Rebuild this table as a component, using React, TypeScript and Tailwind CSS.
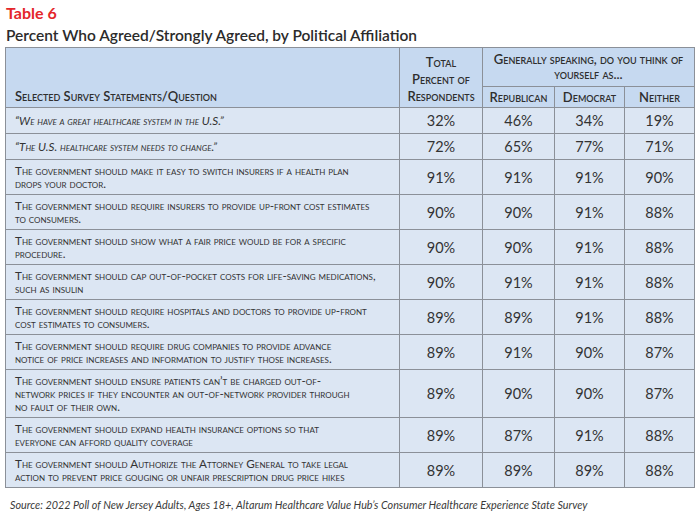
import React from "react";

const rows: [React.ReactNode, string, string, string, string][] = [
  [<span className="italic">“We have a great healthcare system in the U.S.”</span>, "32%", "46%", "34%", "19%"],
  [<span className="italic">“The U.S. healthcare system needs to change.”</span>, "72%", "65%", "77%", "71%"],
  [<>The government should make it easy to switch insurers if a health plan<br />drops your doctor.</>, "91%", "91%", "91%", "90%"],
  [<>The government should require insurers to provide up-front cost estimates<br />to consumers.</>, "90%", "90%", "91%", "88%"],
  [<>The government should show what a fair price would be for a specific<br />procedure.</>, "90%", "90%", "91%", "88%"],
  [<>The government should cap out-of-pocket costs for life-saving medications,<br />such as insulin</>, "90%", "91%", "91%", "88%"],
  [<>The government should require hospitals and doctors to provide up-front<br />cost estimates to consumers.</>, "89%", "89%", "91%", "88%"],
  [<>The government should require drug companies to provide advance<br />notice of price increases and information to justify those increases.</>, "89%", "91%", "90%", "87%"],
  [<>The government should ensure patients can’t be charged out-of-<br />network prices if they encounter an out-of-network provider through<br />no fault of their own.</>, "89%", "90%", "90%", "87%"],
  [<>The government should expand health insurance options so that<br />everyone can afford quality coverage</>, "89%", "87%", "91%", "88%"],
  [<>The government should Authorize the Attorney General to take legal<br />action to prevent price gouging or unfair prescription drug price hikes</>, "89%", "89%", "89%", "88%"],
];

const App = () => {
  return (
    <div className="w-[700px] h-[517px] bg-white font-['Lato',sans-serif] text-[#333]">
      <div className="pl-[6px] pt-[2px]">
        <h1 className="text-[16px] leading-[22px] font-bold text-[#e4262b]">Table 6</h1>
        <h2 className="text-[15.5px] leading-[22px] font-semibold text-[#2b2b2b]">
          Percent Who Agreed/Strongly Agreed, by Political Affiliation
        </h2>
      </div>
      <table className="ml-[5px] mt-[1px] w-[689px] border-collapse table-fixed border border-[#8b9098]">
        <colgroup>
          <col className="w-[394px]" />
          <col className="w-[83px]" />
          <col className="w-[72px]" />
          <col className="w-[70px]" />
          <col className="w-[70px]" />
        </colgroup>
        <thead className="bg-[#c6d9f0] [font-variant-caps:small-caps] font-semibold text-[#2e2e2e]">
          <tr>
            <th rowSpan={2} className="border border-[#8b9098] align-bottom text-left px-[9px] pb-[3px] text-[13px] leading-[16px] font-semibold">
              Selected Survey Statements/Question
            </th>
            <th rowSpan={2} className="border border-[#8b9098] align-bottom text-center pb-[2px] text-[13px] leading-[17px] font-semibold">
              Total
              <br />
              Percent of
              <br />
              Respondents
            </th>
            <th colSpan={3} className="border border-[#8b9098] h-[39px] text-center px-2 text-[13px] leading-[15px] font-semibold">
              Generally speaking, do you think of yourself as...
            </th>
          </tr>
          <tr>
            <th className="border border-[#8b9098] h-[21px] text-center text-[13px] leading-[16px] font-semibold">Republican</th>
            <th className="border border-[#8b9098] text-center text-[13px] leading-[16px] font-semibold">Democrat</th>
            <th className="border border-[#8b9098] text-center text-[13px] leading-[16px] font-semibold">Neither</th>
          </tr>
        </thead>
        <tbody className="bg-[#dce6f3]">
          {rows.map((r, i) => (
            <tr key={i}>
              <td className="border border-[#8b9098] pl-[9px] pr-[2px] py-[4px] whitespace-nowrap overflow-hidden text-[11.7px] leading-[13px] [font-variant-caps:small-caps]">
                {r[0]}
              </td>
              {r.slice(1).map((v, j) => (
                <td key={j} className="border border-[#8b9098] text-center text-[14.5px] leading-[17px] py-[4px]">
                  {v as string}
                </td>
              ))}
            </tr>
          ))}
        </tbody>
      </table>
      <p className="pl-[10px] pt-[10px] text-[10.8px] leading-[14px] italic text-[#3a3a3a]">
        Source: 2022 Poll of New Jersey Adults, Ages 18+, Altarum Healthcare Value Hub’s Consumer Healthcare Experience State Survey
      </p>
    </div>
  );
};

export default App;
